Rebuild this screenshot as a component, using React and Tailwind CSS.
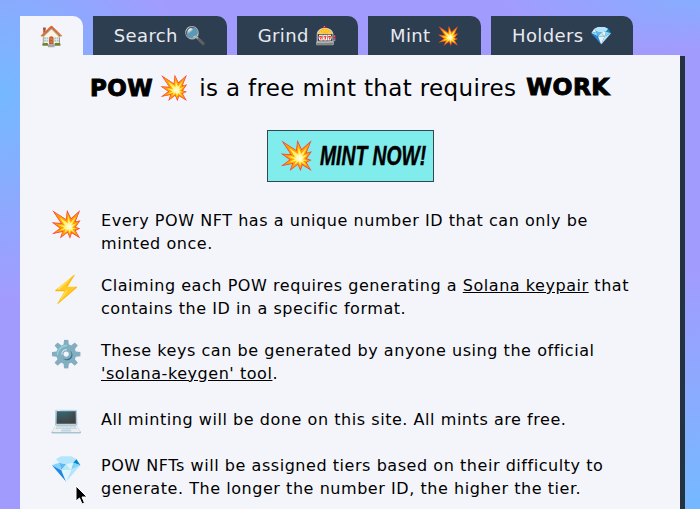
const tabs = [
  { label: 'Search', icon: '🔍', width: 'w-[134px]' },
  { label: 'Grind', icon: '🎰', width: 'w-[121px]' },
  { label: 'Mint', icon: '💥', width: 'w-[113px]' },
  { label: 'Holders', icon: '💎', width: 'w-[142px]' },
]

const items = [
  { icon: '💥', text: <>Every POW NFT has a unique number ID that can only be<br />minted once.</> },
  { icon: '⚡️', text: <>Claiming each POW requires generating a <u>Solana keypair</u> that<br />contains the ID in a specific format.</> },
  { icon: '⚙️', text: <>These keys can be generated by anyone using the official<br /><u>'solana-keygen' tool</u>.</> },
  { icon: '💻', text: <>All minting will be done on this site. All mints are free.</> },
  { icon: '💎', text: <>POW NFTs will be assigned tiers based on their difficulty to<br />generate. The longer the number ID, the higher the tier.</> },
]

export default function App() {
  return (
    <div className="relative h-[509px] overflow-hidden bg-[#a29bfe] bg-[radial-gradient(186px_205px_at_0px_95px,#74b9ff,#74b9ff00),radial-gradient(300px_240px_at_700px_509px,#74b9ff,#74b9ff00),radial-gradient(200px_50px_at_700px_0px,#74b9ff99,#74b9ff00)] font-['DejaVu_Sans',sans-serif] text-black">
      {/* Tabs */}
      <div className="flex gap-[10px] pl-5 pt-4">
        <div className="flex h-[39px] w-[63px] items-center justify-center rounded-tr-[10px] bg-[#f4f5fb] text-[20px]">🏠</div>
        {tabs.map((t) => (
          <div key={t.label} className={`flex h-[39px] items-center justify-center gap-[6px] rounded-tr-[10px] bg-[#2d3e50] text-[18px] tracking-[0.4px] text-[#e8eaf0] ${t.width}`}>
            <span>{t.label}</span>
            <span>{t.icon}</span>
          </div>
        ))}
      </div>

      {/* Card */}
      <div className="ml-5 mr-5 h-[454px] bg-[#f4f5fb] shadow-[5px_1px_0_#233240]">
        <div className="flex h-[66px] items-center justify-center text-[23px] tracking-[0.35px]">
          <span className="text-[23px] font-bold [-webkit-text-stroke:1px_black]">POW</span>
          <span className="ml-[6px] text-[24px]">💥</span>
          <span className="ml-[10px]">is a free mint that requires</span>
          <span className="ml-[10px] text-[23.5px] font-bold [-webkit-text-stroke:1px_black]">WORK</span>
        </div>

        <div className="mt-[9px] flex justify-center">
          <div className="flex h-[52px] w-[167px] items-center overflow-hidden border border-[#33474f] bg-[#81ecec] pl-[11px]">
            <span className="text-[28px] leading-none">💥</span>
            <span className="ml-[6px] w-[106px] origin-left scale-x-[0.69] whitespace-nowrap font-['Liberation_Sans'] text-[28px] font-bold italic [-webkit-text-stroke:0.5px_black]">MINT NOW!</span>
          </div>
        </div>

        <div className="mt-[28px] flex flex-col gap-5 pl-[30px]">
          {items.map((it) => (
            <div key={it.icon} className="flex">
              <div className="h-[30px] w-[51px] shrink-0 text-[26px] leading-[28px]">{it.icon}</div>
              <div className="flex min-h-[30px] items-center text-[16px] leading-[22.5px] tracking-[0.55px]">
                <div>{it.text}</div>
              </div>
            </div>
          ))}
        </div>
      </div>

      {/* Mouse cursor */}
      <svg className="absolute left-[75px] top-[485px]" width="13" height="21" viewBox="0 0 13 21">
        <path d="M1 1 L1 16 L4.5 13 L7 19 L9.5 18 L7 12 L12 12 Z" fill="black" stroke="white" strokeWidth="1" />
      </svg>
    </div>
  )
}
